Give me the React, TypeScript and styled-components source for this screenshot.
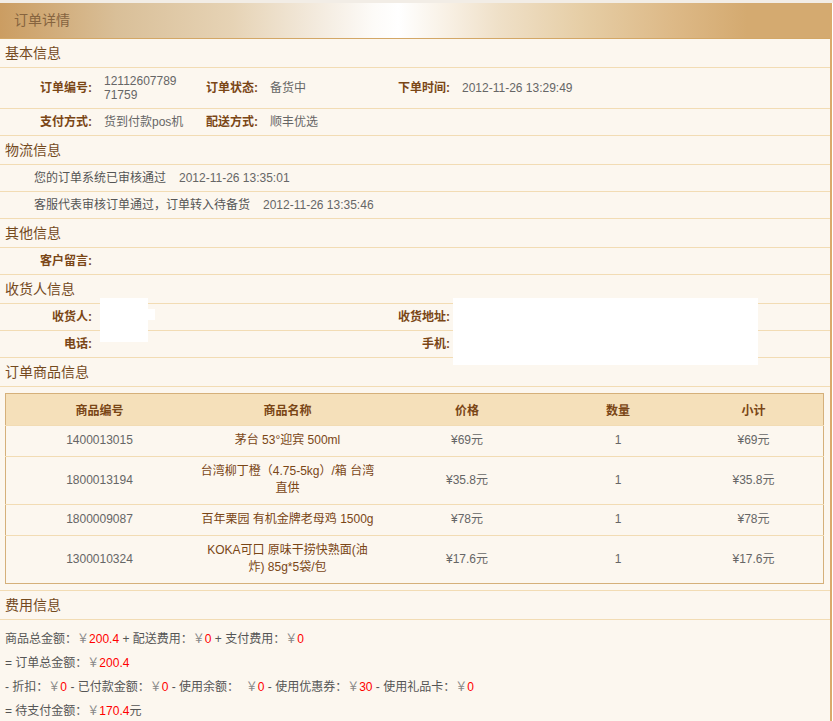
import React from 'react';
import styled, { createGlobalStyle } from 'styled-components';

const GlobalStyle = createGlobalStyle`
  html, body {
    margin: 0;
    padding: 0;
    background: #ffffff;
  }
  body {
    font-family: "Liberation Sans", "Noto Sans CJK SC", sans-serif;
    font-size: 12px;
  }
`;

// Styled Components
const Page = styled.div`
  width: 833px;
  border-top: 3px solid #f2ede6;
`;

const Panel = styled.div`
  width: 830px;
  border-right: 2px solid #d9aa6a;
  background: #fcf7ef;
`;

const TitleBar = styled.div`
  height: 35px;
  line-height: 35px;
  padding-left: 14px;
  font-size: 14px;
  color: #86643f;
  border-bottom: 1px solid #d3a766;
  background: linear-gradient(
    to right,
    #cb9d62 0%,
    #d9bf98 14%,
    #e6d3b5 28%,
    #f3eadd 38%,
    #fdfbf8 45%,
    #ffffff 48%,
    #f8f0e4 54%,
    #efe0c8 60%,
    #e6cea6 70%,
    #ddb987 81%,
    #d4aa70 90%,
    #d4aa70 100%
  );
`;

const SectionTitle = styled.div`
  height: 28px;
  line-height: 28px;
  padding-left: 5px;
  font-size: 14px;
  color: #744a1e;
  border-bottom: 1px solid #f2dcb4;
`;

const InfoRow = styled.div<{ $cols: string; $h?: number }>`
  display: grid;
  grid-template-columns: ${(p) => p.$cols};
  align-items: center;
  min-height: ${(p) => p.$h ?? 26}px;
  border-bottom: 1px solid #f2dcb4;
`;

const Label = styled.div`
  text-align: right;
  padding-right: 4px;
  font-weight: bold;
  color: #7a4616;
  line-height: 14px;
`;

const Value = styled.div<{ $breakAll?: boolean }>`
  position: relative;
  padding: 0 14px 0 8px;
  color: #666;
  line-height: 14px;
  word-break: ${(p) => (p.$breakAll ? 'break-all' : 'normal')};
  white-space: ${(p) => (p.$breakAll ? 'normal' : 'nowrap')};
  align-self: stretch;
  display: flex;
  align-items: center;
`;

// white patch covering private data, sits over the row borders
const Redact = styled.div<{ $l: number; $t: number; $w: number; $h: number; $tab?: boolean }>`
  position: absolute;
  left: ${(p) => p.$l}px;
  top: ${(p) => p.$t}px;
  width: ${(p) => p.$w}px;
  height: ${(p) => p.$h}px;
  background: #ffffff;
  &::after {
    content: '';
    display: ${(p) => (p.$tab ? 'block' : 'none')};
    position: absolute;
    right: -7px;
    top: 11px;
    width: 7px;
    height: 11px;
    background: #ffffff;
  }
`;

const LogRow = styled.div`
  height: 26px;
  line-height: 26px;
  padding-left: 34px;
  color: #555;
  border-bottom: 1px solid #f2dcb4;
`;

const LogTime = styled.span`
  margin-left: 13px;
  color: #666;
`;

const GoodsWrap = styled.div`
  padding: 6px 7px 6px 5px;
  border-bottom: 1px solid #f2dcb4;
`;

const GoodsTable = styled.table`
  width: 819px;
  border-collapse: collapse;
  border: 1px solid #d5b07a;
`;

const Th = styled.th<{ $w: number }>`
  width: ${(p) => p.$w}px;
  height: 31px;
  padding: 0;
  background: #f5e0ba;
  color: #7a4616;
  font-weight: bold;
  font-size: 12px;
  text-align: center;
`;

const Td = styled.td<{ $name?: boolean }>`
  padding: 6px 7px 7px;
  line-height: 17px;
  text-align: center;
  color: ${(p) => (p.$name ? '#7a4616' : '#666')};
  border-top: 1px solid #f2dcb4;
`;

const FeeBlock = styled.div`
  padding: 7px 5px 0;
  line-height: 24px;
  color: #555;
`;

const Yen = styled.span`
  color: #888;
`;

const Red = styled.span`
  color: #ff0000;
`;

const goods = [
  { sn: '1400013015', name: '茅台 53°迎宾 500ml', price: '¥69元', qty: 1, sub: '¥69元' },
  { sn: '1800013194', name: '台湾柳丁橙（4.75-5kg）/箱 台湾直供', price: '¥35.8元', qty: 1, sub: '¥35.8元' },
  { sn: '1800009087', name: '百年栗园 有机金牌老母鸡 1500g', price: '¥78元', qty: 1, sub: '¥78元' },
  { sn: '1300010324', name: 'KOKA可口 原味干捞快熟面(油炸) 85g*5袋/包', price: '¥17.6元', qty: 1, sub: '¥17.6元' },
];

const Money = ({ v }: { v: string }) => (
  <>
    <Yen>￥</Yen>
    <Red>{v}</Red>
  </>
);

const BASIC_COLS = '96px 100px 66px 130px 62px 1fr';
const RECV_COLS = '96px 294px 64px 1fr';

const OrderDetail = () => {
  return (
    <Page>
      <GlobalStyle />
      <Panel>
        <TitleBar>订单详情</TitleBar>

        <SectionTitle>基本信息</SectionTitle>
        <InfoRow $cols={BASIC_COLS} $h={40}>
          <Label>订单编号:</Label>
          <Value $breakAll>1211260778971759</Value>
          <Label>订单状态:</Label>
          <Value>备货中</Value>
          <Label>下单时间:</Label>
          <Value>2012-11-26 13:29:49</Value>
        </InfoRow>
        <InfoRow $cols={BASIC_COLS}>
          <Label>支付方式:</Label>
          <Value>货到付款pos机</Value>
          <Label>配送方式:</Label>
          <Value>顺丰优选</Value>
          <div />
          <div />
        </InfoRow>

        <SectionTitle>物流信息</SectionTitle>
        <LogRow>
          您的订单系统已审核通过<LogTime>2012-11-26 13:35:01</LogTime>
        </LogRow>
        <LogRow>
          客服代表审核订单通过，订单转入待备货<LogTime>2012-11-26 13:35:46</LogTime>
        </LogRow>

        <SectionTitle>其他信息</SectionTitle>
        <InfoRow $cols="96px 1fr">
          <Label>客户留言:</Label>
          <Value />
        </InfoRow>

        <SectionTitle>收货人信息</SectionTitle>
        <InfoRow $cols={RECV_COLS}>
          <Label>收货人:</Label>
          <Value>
            <Redact $l={4} $t={-6} $w={48} $h={44} $tab />
          </Value>
          <Label>收货地址:</Label>
          <Value>
            <Redact $l={-1} $t={-6} $w={305} $h={67} />
          </Value>
        </InfoRow>
        <InfoRow $cols={RECV_COLS}>
          <Label>电话:</Label>
          <Value />
          <Label>手机:</Label>
          <Value />
        </InfoRow>

        <SectionTitle>订单商品信息</SectionTitle>
        <GoodsWrap>
          <GoodsTable>
            <thead>
              <tr>
                <Th $w={187}>商品编号</Th>
                <Th $w={189}>商品名称</Th>
                <Th $w={170}>价格</Th>
                <Th $w={132}>数量</Th>
                <Th $w={139}>小计</Th>
              </tr>
            </thead>
            <tbody>
              {goods.map((g) => (
                <tr key={g.sn}>
                  <Td>{g.sn}</Td>
                  <Td $name>{g.name}</Td>
                  <Td>{g.price}</Td>
                  <Td>{g.qty}</Td>
                  <Td>{g.sub}</Td>
                </tr>
              ))}
            </tbody>
          </GoodsTable>
        </GoodsWrap>

        <SectionTitle>费用信息</SectionTitle>
        <FeeBlock>
          <div>
            商品总金额：<Money v="200.4" /> + 配送费用：<Money v="0" /> + 支付费用：<Money v="0" />
          </div>
          <div>
            = 订单总金额：<Money v="200.4" />
          </div>
          <div>
            - 折扣：<Money v="0" /> - 已付款金额：<Money v="0" /> - 使用余额：&nbsp;&nbsp;<Money v="0" /> - 使用优惠券：
            <Money v="30" /> - 使用礼品卡：<Money v="0" />
          </div>
          <div>
            = 待支付金额：<Money v="170.4" />元
          </div>
        </FeeBlock>
      </Panel>
    </Page>
  );
};

export default OrderDetail;
